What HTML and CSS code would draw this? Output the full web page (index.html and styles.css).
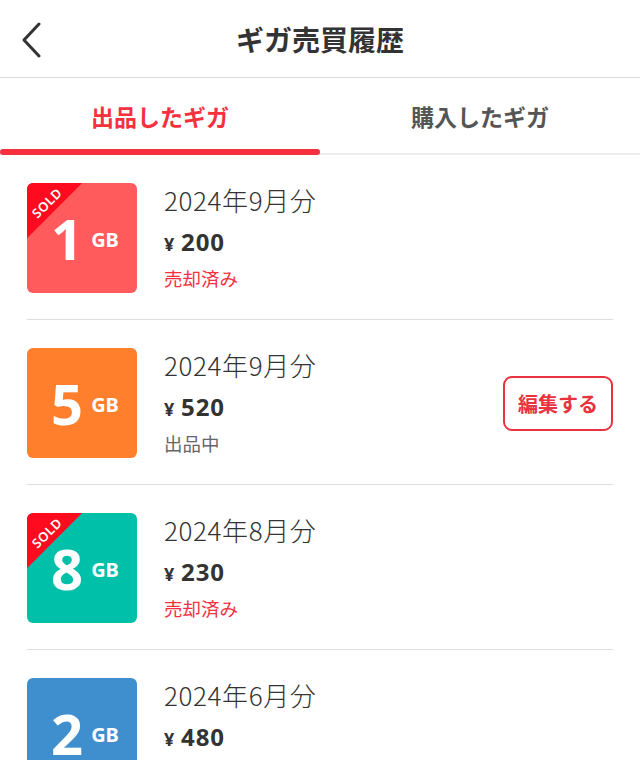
FILE: index.html
```html
<!DOCTYPE html>
<html lang="ja">
<head>
<meta charset="utf-8">
<link rel="stylesheet" href="styles.css">
</head>
<body>
<header class="header">
  <button class="back" aria-label="戻る">
    <svg width="24" height="36" viewBox="0 0 24 36"><path d="M19 2 L4 18 L19 34" fill="none" stroke="#333" stroke-width="3" stroke-linecap="round" stroke-linejoin="round"/></svg>
  </button>
  <h1 class="title">ギガ売買履歴</h1>
</header>
<nav class="tabs">
  <div class="tab active">出品したギガ</div>
  <div class="tab">購入したギガ</div>
</nav>
<main class="list">
  <div class="row">
    <div class="thumb red"><span class="sold">SOLD</span><span class="num">1</span><span class="gb">GB</span></div>
    <div class="info">
      <div class="date">2024年9月分</div>
      <div class="price"><span class="yen">¥</span>200</div>
      <div class="status sold-st">売却済み</div>
    </div>
  </div>
  <div class="row">
    <div class="thumb orange"><span class="num">5</span><span class="gb">GB</span></div>
    <div class="info">
      <div class="date">2024年9月分</div>
      <div class="price"><span class="yen">¥</span>520</div>
      <div class="status">出品中</div>
    </div>
    <button class="edit">編集する</button>
  </div>
  <div class="row">
    <div class="thumb teal"><span class="sold">SOLD</span><span class="num">8</span><span class="gb">GB</span></div>
    <div class="info">
      <div class="date">2024年8月分</div>
      <div class="price"><span class="yen">¥</span>230</div>
      <div class="status sold-st">売却済み</div>
    </div>
  </div>
  <div class="row">
    <div class="thumb blue"><span class="num">2</span><span class="gb">GB</span></div>
    <div class="info">
      <div class="date">2024年6月分</div>
      <div class="price"><span class="yen">¥</span>480</div>
      <div class="status">出品中</div>
    </div>
  </div>
</main>
</body>
</html>
```
FILE: styles.css
```css
* { box-sizing: border-box; }
html, body { margin: 0; padding: 0; background: #fff; }
body {
  width: 640px;
  height: 760px;
  overflow: hidden;
  font-family: "Noto Sans CJK JP", "Noto Sans", sans-serif;
  color: #333;
}
.header {
  height: 78px;
  border-bottom: 1px solid #dcdcdc;
  display: flex;
  align-items: center;
  justify-content: center;
  position: relative;
}
.back {
  position: absolute;
  left: 20px;
  top: 22px;
  background: none;
  border: 0;
  padding: 0;
  line-height: 0;
}
.title {
  margin: 0;
  font-size: 28px;
  font-weight: 700;
  color: #333;
}
.tabs {
  display: flex;
  height: 77px;
  border-bottom: 2px solid #ececec;
}
.tab {
  flex: 1;
  display: flex;
  align-items: center;
  justify-content: center;
  font-size: 23px;
  font-weight: 700;
  color: #555;
  position: relative;
}
.tab.active { color: #f5303f; }
.tab.active::after {
  content: "";
  position: absolute;
  left: 0;
  right: 0;
  bottom: -2px;
  height: 6px;
  border-radius: 3px;
  background: #f5303f;
}
.list { margin: 0 27px; }
.row {
  display: flex;
  align-items: center;
  padding: 28px 0 26px;
  border-bottom: 1px solid #dedede;
}
.thumb {
  width: 110px;
  height: 110px;
  border-radius: 6px;
  position: relative;
  overflow: hidden;
  display: flex;
  align-items: center;
  justify-content: center;
  color: #fff;
  font-family: "Noto Sans", sans-serif;
  font-weight: 700;
  flex-shrink: 0;
  padding-left: 6px;
}
.red { background: #ff5b5d; }
.orange { background: #ff7f2c; }
.teal { background: #00c0a9; }
.blue { background: #3f8fcf; }
.num { font-size: 56px; line-height: 1; }
.gb { font-size: 20px; margin-left: 8px; margin-top: 2px; }
.sold {
  position: absolute;
  left: -39px;
  top: -39px;
  width: 78px;
  height: 78px;
  background: #ff0a1e;
  transform: rotate(-45deg);
  transform-origin: center;
  display: flex;
  align-items: flex-end;
  justify-content: center;
  font-size: 13px;
  font-weight: 600;
  line-height: 13px;
  padding-bottom: 4px;
  letter-spacing: 0.5px;
}
.info {
  flex: 1;
  margin-left: 27px;
  display: flex;
  flex-direction: column;
  height: 110px;
}
.date { font-size: 26px; height: 34px; line-height: 34px; font-weight: 300; color: #333; letter-spacing: 0.6px; }
.price {
  height: 30px; line-height: 30px;
  font-size: 24px; font-weight: 700; margin-top: 10px; color: #333;
  font-family: "Noto Sans", "Noto Sans CJK JP", sans-serif;
  display: flex; align-items: baseline;
  letter-spacing: 0.8px;
}
.yen { font-size: 18px; margin-right: 6px; }
.status { font-size: 18.5px; height: 26px; line-height: 26px; margin-top: 8px; color: #666; }
.status.sold-st { color: #f5303f; }
.edit {
  width: 110px;
  height: 55px;
  border: 2px solid #e8323e;
  border-radius: 9px;
  background: #fff;
  color: #e8323e;
  font-family: "Noto Sans CJK JP", sans-serif;
  font-size: 20px;
  font-weight: 700;
  padding: 0;
}
```
